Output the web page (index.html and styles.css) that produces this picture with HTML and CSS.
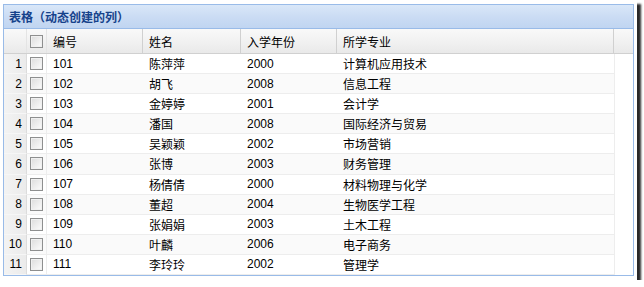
FILE: index.html
```html
<!DOCTYPE html>
<html lang="zh-CN">
<head>
<meta charset="utf-8">
<title>表格（动态创建的列）</title>
<link rel="stylesheet" href="styles.css">
</head>
<body>
<div class="frame">
  <div class="panel">
    <div class="title">表格（动态创建的列）</div>
    <div class="grid">
      <div class="hrow">
        <div class="c num"></div>
        <div class="c chk"><span class="box"></span></div>
        <div class="c col1">编号</div>
        <div class="c col2">姓名</div>
        <div class="c col3">入学年份</div>
        <div class="c col4">所学专业</div>
        <div class="c gut"></div>
      </div>
      <div class="body">
        <div class="row"><div class="c num">1</div><div class="c chk"><span class="box"></span></div><div class="c col1">101</div><div class="c col2">陈萍萍</div><div class="c col3">2000</div><div class="c col4">计算机应用技术</div></div>
        <div class="row alt"><div class="c num">2</div><div class="c chk"><span class="box"></span></div><div class="c col1">102</div><div class="c col2">胡飞</div><div class="c col3">2008</div><div class="c col4">信息工程</div></div>
        <div class="row"><div class="c num">3</div><div class="c chk"><span class="box"></span></div><div class="c col1">103</div><div class="c col2">金婷婷</div><div class="c col3">2001</div><div class="c col4">会计学</div></div>
        <div class="row alt"><div class="c num">4</div><div class="c chk"><span class="box"></span></div><div class="c col1">104</div><div class="c col2">潘国</div><div class="c col3">2008</div><div class="c col4">国际经济与贸易</div></div>
        <div class="row"><div class="c num">5</div><div class="c chk"><span class="box"></span></div><div class="c col1">105</div><div class="c col2">吴颖颖</div><div class="c col3">2002</div><div class="c col4">市场营销</div></div>
        <div class="row alt"><div class="c num">6</div><div class="c chk"><span class="box"></span></div><div class="c col1">106</div><div class="c col2">张博</div><div class="c col3">2003</div><div class="c col4">财务管理</div></div>
        <div class="row"><div class="c num">7</div><div class="c chk"><span class="box"></span></div><div class="c col1">107</div><div class="c col2">杨倩倩</div><div class="c col3">2000</div><div class="c col4">材料物理与化学</div></div>
        <div class="row alt"><div class="c num">8</div><div class="c chk"><span class="box"></span></div><div class="c col1">108</div><div class="c col2">董超</div><div class="c col3">2004</div><div class="c col4">生物医学工程</div></div>
        <div class="row"><div class="c num">9</div><div class="c chk"><span class="box"></span></div><div class="c col1">109</div><div class="c col2">张娟娟</div><div class="c col3">2003</div><div class="c col4">土木工程</div></div>
        <div class="row alt"><div class="c num">10</div><div class="c chk"><span class="box"></span></div><div class="c col1">110</div><div class="c col2">叶麟</div><div class="c col3">2006</div><div class="c col4">电子商务</div></div>
        <div class="row"><div class="c num">11</div><div class="c chk"><span class="box"></span></div><div class="c col1">111</div><div class="c col2">李玲玲</div><div class="c col3">2002</div><div class="c col4">管理学</div></div>
      </div>
    </div>
  </div>
</div>
</body>
</html>
```
FILE: styles.css
```css
* { box-sizing: border-box; }
html, body {
  margin: 0;
  padding: 0;
  background: #ffffff;
}
body {
  font-family: "Liberation Sans", "Noto Sans CJK SC", sans-serif;
  font-size: 12px;
  color: #000;
}
.frame {
  width: 637px;
  height: 280px;
  padding: 4px 0 0 3px;
  background: #fff;
  box-shadow: 4px 4px 2px 0 rgba(30, 30, 30, 0.95);
}
.panel {
  width: 631px;
  height: 272px;
  border: 1px solid #99bbe8;
  display: flex;
  flex-direction: column;
  background: #fff;
}
.title {
  height: 24px;
  flex: none;
  display: flex;
  align-items: center;
  padding-left: 5px;
  font-weight: bold;
  color: #15428b;
  background: linear-gradient(#d9e7f8, #cbdcf4 50%, #c0d5f1);
  border-bottom: 1px solid #99bbe8;
}
.grid {
  flex: 1;
  display: flex;
  flex-direction: column;
}
.hrow {
  height: 25px;
  flex: none;
  display: flex;
  background: linear-gradient(#f9f9f9, #f0f0f0 60%, #e9e9e9);
  border-bottom: 1px solid #d0d0d0;
}
.c {
  display: flex;
  align-items: center;
  white-space: nowrap;
  overflow: hidden;
}
.num { width: 23px; justify-content: flex-end; padding-right: 4px; }
.chk { width: 20px; justify-content: center; }
.col1 { width: 96px; padding-left: 6px; }
.col2 { width: 98px; padding-left: 6px; }
.col3 { width: 96px; padding-left: 6px; }
.col4 { width: 277px; padding-left: 6px; }
.gut { flex: 1; }
.hrow .c { border-right: 1px solid #d0d0d0; }
.hrow .num { border-right: 1px solid #e4e4e4; }
.hrow .chk { border-right: 1px solid #e4e4e4; }
.hrow .gut { border-right: none; }
.body {
  flex: 1;
  display: grid;
  grid-template-rows: repeat(11, 1fr);
}
.row {
  display: flex;
  width: 611px;
  border-bottom: 1px solid #ededed;
  border-right: 1px solid #ededed;
  background: #fff;
}
.row.alt { background: #fafafa; }
.row .num {
  background: linear-gradient(90deg, #f3f3f3, #ebebeb);
  border-right: 1px solid #dcdcdc;
  border-bottom: 1px solid #f6f6f6;
  margin-bottom: -1px;
  color: #000;
}
.row .chk { border-right: 1px solid #ededed; }
.box {
  display: block;
  width: 13px;
  height: 13px;
  border: 1px solid #8e8f8f;
  background: linear-gradient(135deg, #dcdcdc, #f6f6f6 80%);
  box-shadow: inset 0 0 0 1px #f0f0f0;
}
```
